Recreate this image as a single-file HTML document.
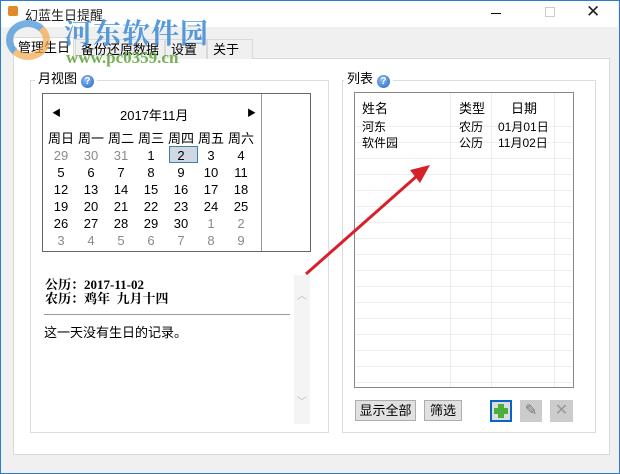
<!DOCTYPE html>
<html><head><meta charset="utf-8"><style>
*{margin:0;padding:0;box-sizing:border-box}
body{width:620px;height:474px;overflow:hidden;background:#f0f0f0;font-family:"Liberation Sans","Microsoft YaHei","Noto Sans CJK SC",sans-serif;font-size:12px;color:#000;position:relative}
.a{position:absolute;white-space:nowrap}
.win{left:0;top:0;width:620px;height:474px;border:1px solid #2b7bcf}
.title{left:1px;top:1px;width:617px;height:26px;background:#fff}
.tab{top:39px;height:20px;border:1px solid #d9d9d9;border-bottom:none;background:#f0f0f0;font-size:13px;padding-left:5px;line-height:19px}
.page{left:13px;top:58px;width:597px;height:397px;background:#fff;border:1px solid #d9d9d9}
.grp{border:1px solid #dcdcdc}
.lbl{background:#fff;font-size:13px;padding:0 3px;line-height:16px}
.q{display:inline-block;width:13px;height:13px;border-radius:50%;background:radial-gradient(circle at 40% 35%,#8fc0f5,#1f5fc0);color:#fff;font-size:10px;font-weight:bold;text-align:center;line-height:13px;vertical-align:-1px;margin-left:4px}
.cal td{width:30px;text-align:center;height:17px;font-size:13px;padding:0}
.g{color:#8a8a8a}
.btn{height:21px;background:#e1e1e1;border:1px solid #adadad;font-size:13px;text-align:center;line-height:19px}
</style></head><body>
<div class="a win"></div>
<div class="a title"></div>
<div class="a" style="left:8px;top:6px;width:10px;height:10px;background:#e28a2a;border-radius:2px"></div>
<div class="a" style="left:25px;top:5px;font-size:13px;color:#222">幻蓝生日提醒</div>
<div class="a" style="left:491px;top:13px;width:10px;height:1px;background:#000"></div>
<div class="a" style="left:545px;top:7px;width:10px;height:10px;border:1px solid #ccc"></div>
<div class="a" style="left:586px;top:2px;font-size:17px;color:#222">✕</div>

<div class="a page"></div>
<div class="a tab" style="left:13px;top:37px;width:61px;height:22px;background:#fff;border-color:#d9d9d9;padding-left:4px">管理生日</div>
<div class="a tab" style="left:75px;width:90px">备份还原数据</div>
<div class="a tab" style="left:165px;width:42px">设置</div>
<div class="a tab" style="left:207px;width:46px">关于</div>

<!-- watermark -->
<div class="a" style="left:6px;top:20px;width:44px;height:40px;border-radius:50%;border:7px solid #3d8fd6;border-right-color:#f3a64a;border-bottom-color:#f3a64a;opacity:.7"></div>
<div class="a" style="left:64px;top:12px;font-size:28px;font-weight:bold;color:#3a8ad6;opacity:.85;letter-spacing:1px;font-family:'Noto Serif CJK SC',serif">河东软件园</div>
<div class="a" style="left:66px;top:48px;font-size:17px;font-weight:bold;color:#5ea437;opacity:.85;font-family:'Liberation Serif',serif">www.pc0359.cn</div>

<!-- left group -->
<div class="a grp" style="left:30px;top:80px;width:299px;height:353px"></div>
<div class="a lbl" style="left:35px;top:71px">月视图<span class="q">?</span></div>
<div class="a" style="left:42px;top:93px;width:269px;height:159px;border:1px solid #666;background:#fff"></div>
<div class="a" style="left:43px;top:94px;width:219px;height:157px;border-right:1px solid #999"></div>
<div class="a" style="left:52px;top:106px;font-size:9px">◀</div>
<div class="a" style="left:247px;top:106px;font-size:9px">▶</div>
<div class="a" style="left:120px;top:105px;font-size:13px">2017年11月</div>
<div class="a" style="left:169px;top:146px;width:29px;height:17px;background:#cfd8e3;border:1px solid #3c7fb1"></div>
<table class="a cal" style="left:46px;top:128px;border-collapse:collapse">
<tr><td>周日</td><td>周一</td><td>周二</td><td>周三</td><td>周四</td><td>周五</td><td>周六</td></tr>
<tr><td class="g">29</td><td class="g">30</td><td class="g">31</td><td>1</td><td>2</td><td>3</td><td>4</td></tr>
<tr><td>5</td><td>6</td><td>7</td><td>8</td><td>9</td><td>10</td><td>11</td></tr>
<tr><td>12</td><td>13</td><td>14</td><td>15</td><td>16</td><td>17</td><td>18</td></tr>
<tr><td>19</td><td>20</td><td>21</td><td>22</td><td>23</td><td>24</td><td>25</td></tr>
<tr><td>26</td><td>27</td><td>28</td><td>29</td><td>30</td><td class="g">1</td><td class="g">2</td></tr>
<tr><td class="g">3</td><td class="g">4</td><td class="g">5</td><td class="g">6</td><td class="g">7</td><td class="g">8</td><td class="g">9</td></tr>
</table>
<div class="a" style="left:45px;top:278px;font-weight:bold;font-size:13px;line-height:14px;font-family:'Liberation Serif','Noto Serif CJK SC',serif">公历：2017-11-02<br>农历：鸡年&nbsp; 九月十四</div>
<div class="a" style="left:44px;top:314px;width:246px;height:1px;background:#999"></div>
<div class="a" style="left:44px;top:322px;font-size:13px">这一天没有生日的记录。</div>
<div class="a" style="left:294px;top:275px;width:16px;height:149px;background:#f4f4f4"></div>
<div class="a" style="left:297px;top:287px;color:#bbb;font-size:10px">︿</div>
<div class="a" style="left:297px;top:393px;color:#bbb;font-size:10px">﹀</div>

<!-- right group -->
<div class="a grp" style="left:342px;top:80px;width:254px;height:353px"></div>
<div class="a lbl" style="left:344px;top:71px">列表<span class="q">?</span></div>
<div class="a" style="left:354px;top:92px;width:220px;height:296px;border:1px solid #888;background:#fff;background-image:repeating-linear-gradient(to bottom,transparent 0 15px,#eee 15px 16px);background-position:0 18px"></div>
<div class="a" style="left:355px;top:93px;width:218px;height:24px;background:#fff"></div>
<div class="a" style="left:450px;top:93px;width:1px;height:294px;background:#eee"></div>
<div class="a" style="left:491px;top:93px;width:1px;height:294px;background:#eee"></div>
<div class="a" style="left:554px;top:93px;width:1px;height:294px;background:#eee"></div>
<div class="a" style="left:362px;top:98px;font-size:13px">姓名</div>
<div class="a" style="left:459px;top:98px;font-size:13px">类型</div>
<div class="a" style="left:511px;top:98px;font-size:13px">日期</div>
<div class="a" style="left:362px;top:119px;font-size:12px;line-height:16px">河东<br>软件园</div>
<div class="a" style="left:459px;top:119px;font-size:12px;line-height:16px">农历<br>公历</div>
<div class="a" style="left:498px;top:119px;font-size:12px;line-height:16px">01月01日<br>11月02日</div>
<div class="a btn" style="left:355px;top:400px;width:61px">显示全部</div>
<div class="a btn" style="left:424px;top:400px;width:38px">筛选</div>
<div class="a" style="left:490px;top:400px;width:22px;height:22px;border:2px solid #0a64c8;background:#ddd"></div>
<div class="a" style="left:498px;top:404px;width:6px;height:14px;background:#4caf3a"></div>
<div class="a" style="left:494px;top:408px;width:14px;height:6px;background:#4caf3a"></div>
<div class="a" style="left:520px;top:400px;width:22px;height:22px;background:#ccc;color:#777;text-align:center;font-size:15px;line-height:22px">✎</div>
<div class="a" style="left:550px;top:400px;width:23px;height:22px;background:#ccc;color:#999;text-align:center;font-size:16px;line-height:22px">✕</div>

<svg class="a" style="left:0;top:0" width="620" height="474"><line x1="306" y1="274" x2="418" y2="175" stroke="#d6212a" stroke-width="3"/><polygon points="430,165 420,183 410,170" fill="#d6212a"/></svg>
</body></html>
